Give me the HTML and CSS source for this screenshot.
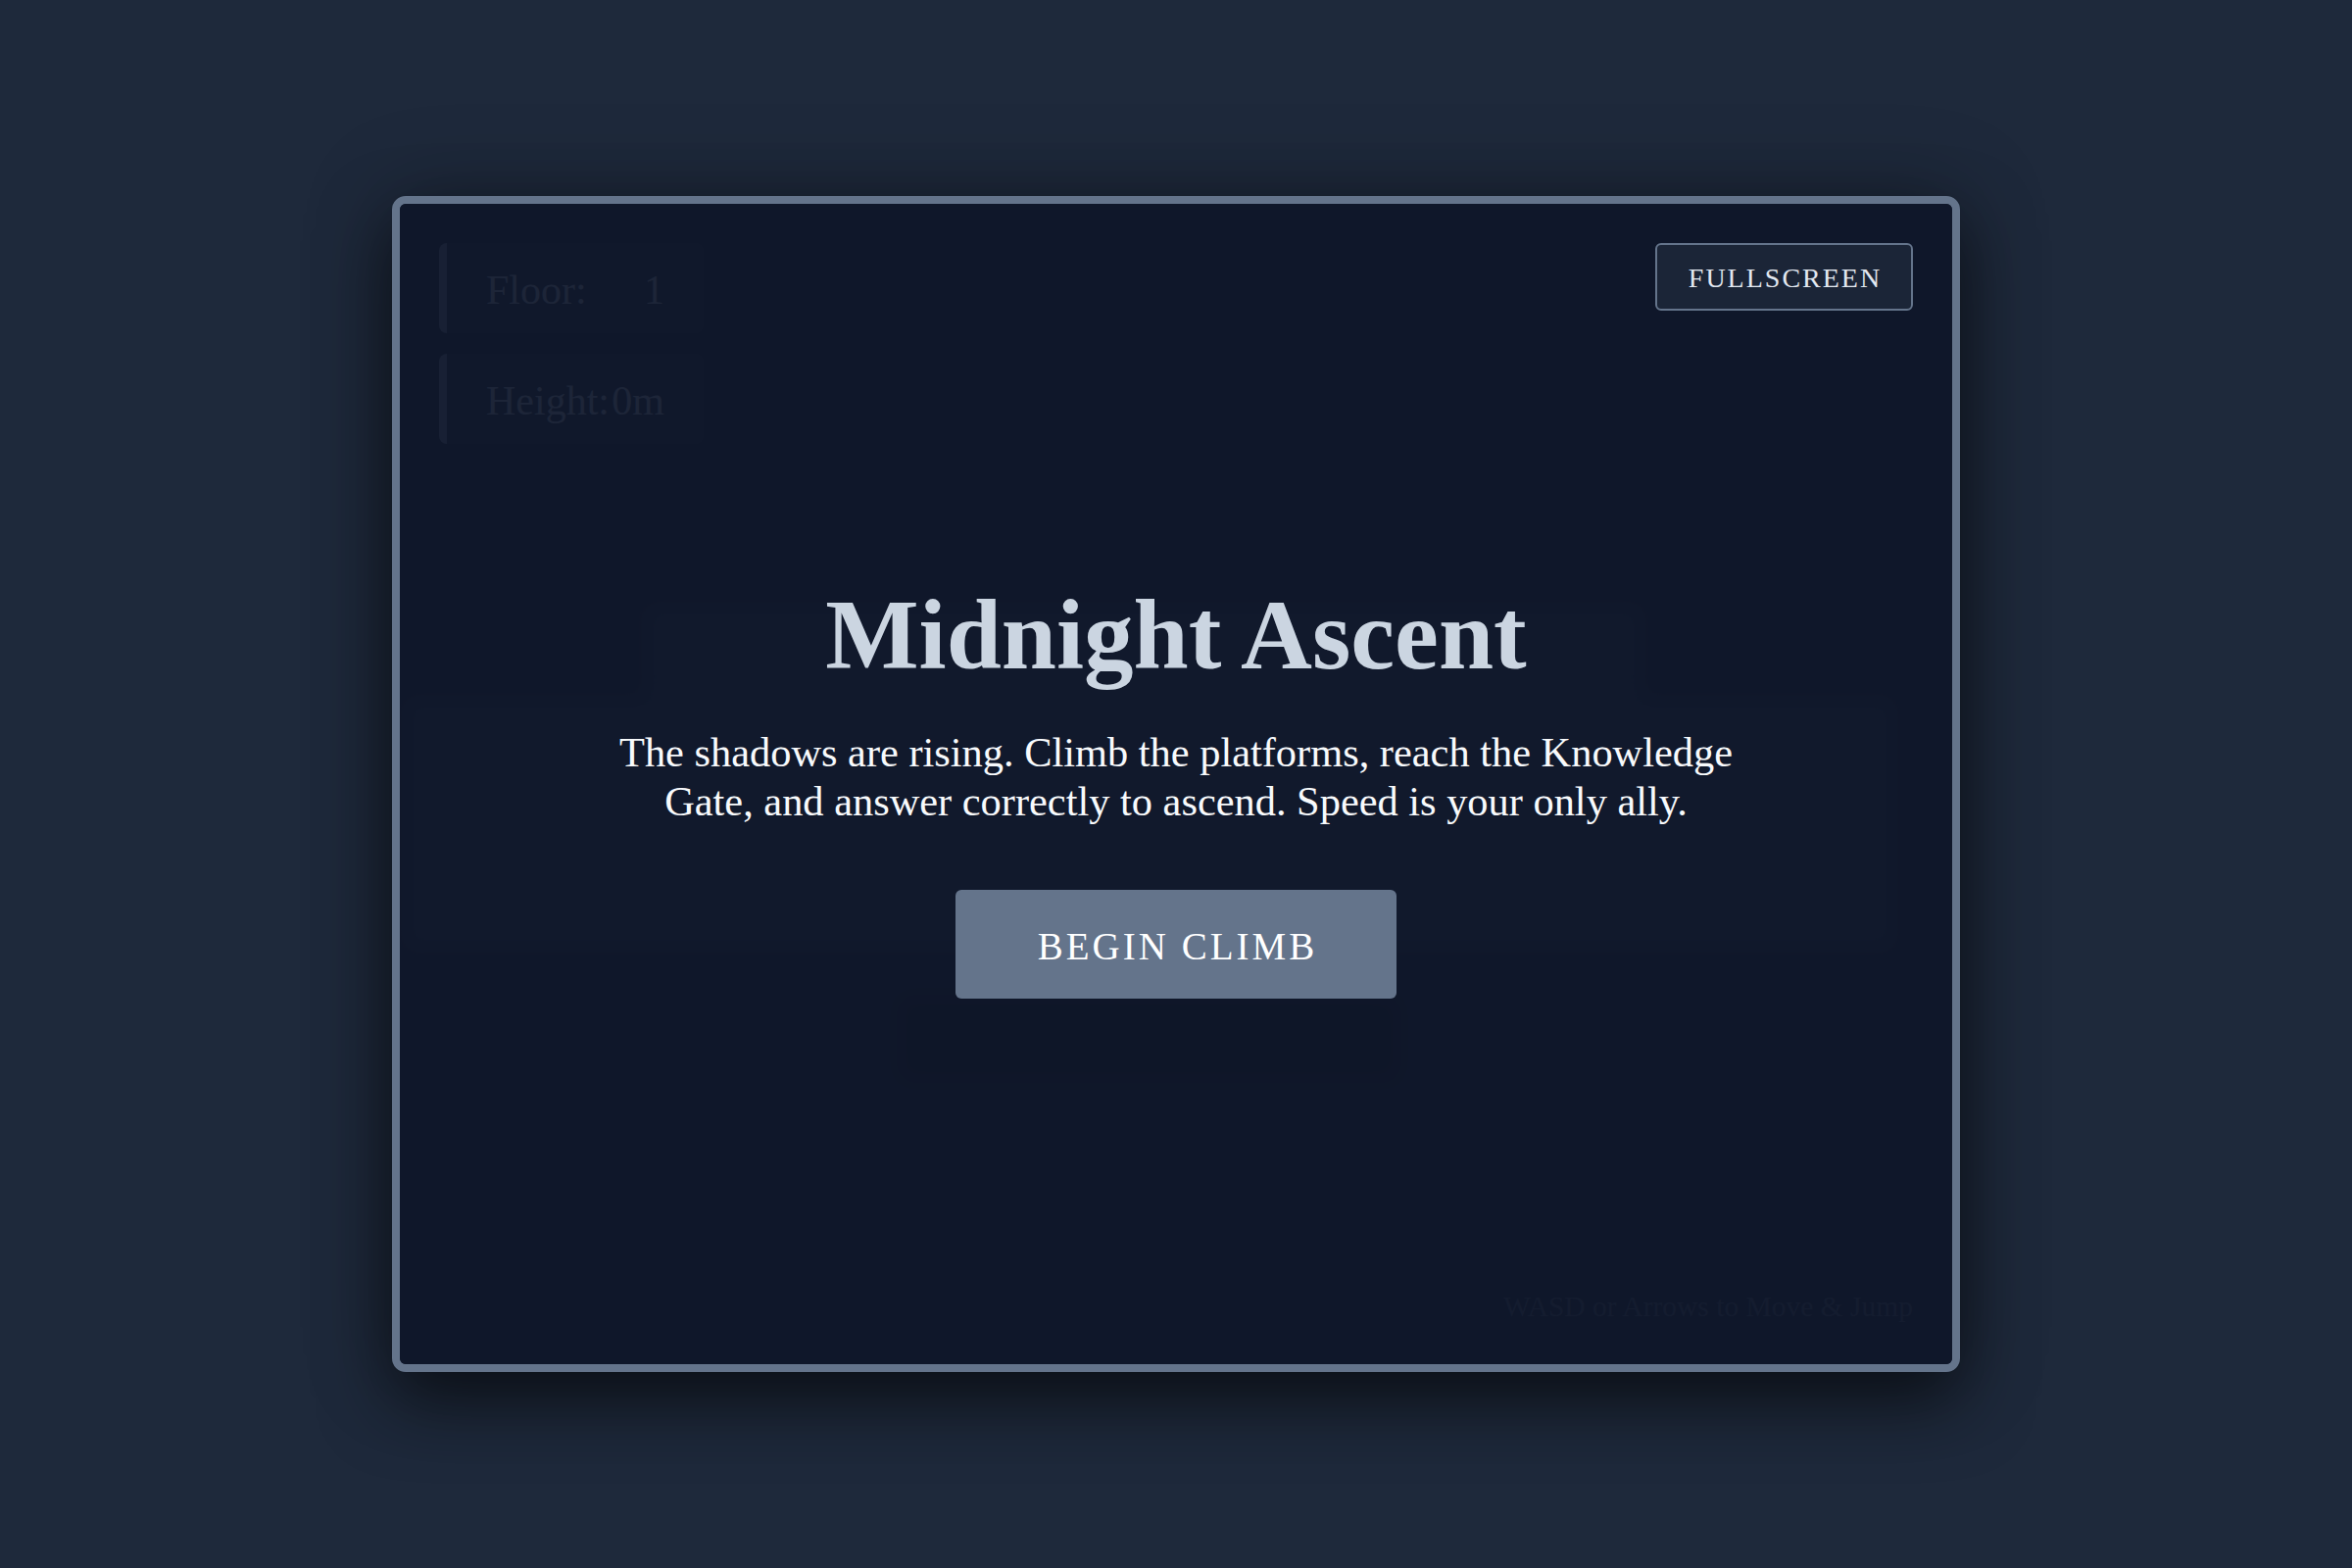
FILE: index.html
```html
<!DOCTYPE html>
<html lang="en">
<head>
<meta charset="utf-8">
<title>Midnight Ascent</title>
<link rel="stylesheet" href="styles.css">
</head>
<body>
<main class="stage">
  <div class="game">
    <div class="world" aria-hidden="true">
      <div class="glow glow-a"></div>
      <div class="glow glow-b"></div>
      <div class="shade shade-c"></div>
    </div>
    <div class="hud">
      <div class="stat"><span class="stat-label">Floor:</span><span class="stat-value">1</span></div>
      <div class="stat"><span class="stat-label">Height:</span><span class="stat-value">0m</span></div>
    </div>
    <div class="controls-hint">WASD or Arrows to Move &amp; Jump</div>
    <div class="overlay">
      <h1 class="title">Midnight Ascent</h1>
      <p class="intro">The shadows are rising. Climb the platforms, reach the Knowledge Gate, and answer correctly to ascend. Speed is your only ally.</p>
      <button class="begin-btn" type="button">BEGIN CLIMB</button>
    </div>
    <button class="fullscreen-btn" type="button">FULLSCREEN</button>
  </div>
</main>
</body>
</html>
```
FILE: styles.css
```css
* { box-sizing: border-box; }

html, body {
  margin: 0;
  height: 100%;
}

body {
  background: #1e293b;
  font-family: "Liberation Serif", "Times New Roman", serif;
  overflow: hidden;
}

.stage {
  height: 100vh;
  display: flex;
  align-items: center;
  justify-content: center;
}

.game {
  position: relative;
  width: 1600px;
  height: 1200px;
  border: 8px solid #64748b;
  border-radius: 14px;
  background: #0f172a;
  box-shadow: 0 30px 70px rgba(0, 0, 0, 0.55), 0 0 90px rgba(0, 0, 0, 0.25);
  overflow: hidden;
}

.world {
  position: absolute;
  inset: 0;
}

.glow {
  position: absolute;
  background: #212c40;
  filter: blur(10px);
}

.glow-a { left: 250px; top: 410px; width: 1018px; height: 110px; }
.glow-b { left: 5px; top: 505px; width: 1520px; height: 255px; }

.shade {
  position: absolute;
  background: #000;
  filter: blur(10px);
}

.shade-c { left: 512px; top: 812px; width: 505px; height: 80px; opacity: 0.45; }

.hud {
  position: absolute;
  top: 40px;
  left: 40px;
  display: flex;
  flex-direction: column;
  gap: 21px;
}

.stat {
  display: flex;
  justify-content: space-between;
  min-width: 270px;
  padding: 22px 40px 18px 40px;
  border-left: 8px solid #64748b;
  border-radius: 8px;
  background: rgba(30, 41, 59, 0.7);
  color: #94a3b8;
  font-size: 42px;
  line-height: 52px;
}

.controls-hint {
  position: absolute;
  right: 40px;
  bottom: 42px;
  color: #3f4d60;
  font-size: 29.5px;
}

.overlay {
  position: absolute;
  inset: 0;
  display: flex;
  flex-direction: column;
  align-items: center;
  justify-content: center;
  padding-top: 7px;
  background: rgba(15, 23, 42, 0.9);
  text-align: center;
}

.title {
  margin: 0 0 34px;
  color: #cbd5e1;
  font-size: 101px;
  font-weight: 700;
  line-height: 1.2;
}

.intro {
  margin: 0 0 65px;
  max-width: 1200px;
  color: #f8fafc;
  font-size: 42.4px;
  line-height: 50px;
}

.begin-btn {
  padding: 35px 81px 29px 84px;
  border: none;
  border-radius: 6px;
  background: #64748b;
  color: #ffffff;
  font-family: inherit;
  font-size: 39px;
  line-height: 1.2;
  letter-spacing: 3px;
}

.fullscreen-btn {
  position: absolute;
  top: 40px;
  right: 40px;
  width: 263px;
  padding: 17px 0 14px 2px;
  border: 2px solid #64748b;
  border-radius: 6px;
  background: rgba(30, 41, 59, 0.8);
  color: #e2e8f0;
  font-family: inherit;
  font-size: 28px;
  line-height: 1.2;
  letter-spacing: 2px;
}
```
